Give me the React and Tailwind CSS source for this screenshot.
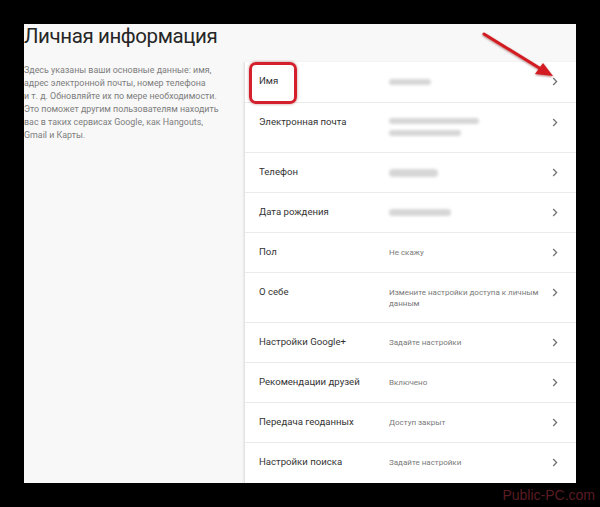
import React from 'react';

const Chevron = () => (
  <svg width="6" height="9" viewBox="0 0 6 9" className="shrink-0">
    <path d="M1.2 1 L4.6 4.5 L1.2 8" fill="none" stroke="#757575" strokeWidth="1.3" />
  </svg>
);

const Blur = ({ w, className = '' }) => (
  <div className={`h-[6px] rounded-sm bg-[#d6d6d6] blur-[1.5px] ${className}`} style={{ width: w }} />
);

const rows = [
  { label: 'Имя', h: 'h-[41px]', value: <Blur w={42} className="mt-[3px]" /> },
  {
    label: 'Электронная почта',
    h: 'h-[50px]',
    value: (
      <div className="flex flex-col gap-[6px] pt-[1px]">
        <Blur w={90} />
        <Blur w={72} />
      </div>
    ),
  },
  { label: 'Телефон', h: 'h-[40px]', value: <Blur w={49} className="mt-[2px] h-[8px]" /> },
  { label: 'Дата рождения', h: 'h-[40px]', value: <Blur w={62} className="mt-[2px] h-[7px]" /> },
  { label: 'Пол', h: 'h-[40px]', value: 'Не скажу' },
  { label: 'О себе', h: 'h-[50px]', value: 'Измените настройки доступа к личным данным' },
  { label: 'Настройки Google+', h: 'h-[40px]', value: 'Задайте настройки' },
  { label: 'Рекомендации друзей', h: 'h-[40px]', value: 'Включено' },
  { label: 'Передача геоданных', h: 'h-[40px]', value: 'Доступ закрыт' },
  { label: 'Настройки поиска', h: 'h-[40px]', value: 'Задайте настройки' },
];

const Row = ({ label, value, h, last }) => (
  <div className={`flex pl-[14px] pr-[18px] ${h} ${last ? '' : 'border-b border-[#ebebeb]'}`}>
    <div className="w-[130px] shrink-0 pt-[12px] text-[9.6px] leading-[14px] text-[#333]">{label}</div>
    <div className="w-[150px] pt-[14px] text-[8px] leading-[11px] text-[#7a7a7a]">{value}</div>
    <div className="ml-auto pt-[15px]">
      <Chevron />
    </div>
  </div>
);

export default function App() {
  return (
    <div className="relative w-[600px] h-[507px] bg-black overflow-hidden font-['Roboto','Liberation_Sans',sans-serif]">
      <div className="pt-[24px] px-[24px]">
        <div className="h-[459px] bg-[#f8f8f8] flex flex-col">
          {/* Title */}
          <div className="h-[38px]">
            <h1 className="-mt-[1px] text-[20.5px] leading-[26px] font-normal text-[#262626] tracking-[-0.4px]">
              Личная информация
            </h1>
          </div>

          <div className="flex flex-1">
            {/* Description */}
            <div className="w-[220px] shrink-0 pt-[2px] text-[8.9px] leading-[13px] text-[#7d7d7d] whitespace-nowrap">
              Здесь указаны ваши основные данные: имя,
              <br />
              адрес электронной почты, номер телефона
              <br />
              и т. д. Обновляйте их по мере необходимости.
              <br />
              Это поможет другим пользователям находить
              <br />
              вас в таких сервисах Google, как Hangouts,
              <br />
              Gmail и Карты.
            </div>

            {/* Card */}
            <div className="relative flex-1 bg-white border-l border-[#e2e2e2] shadow-[-1px_0_2px_rgba(0,0,0,0.06)]">
              {rows.map((r, i) => (
                <Row key={r.label} {...r} last={i === rows.length - 1} />
              ))}
              {/* highlight box */}
              <div className="absolute left-[4px] top-[0px] w-[48px] h-[42px] rounded-[7px] border-[3px] border-[#d3202c] shadow-[0_0_3px_rgba(120,0,0,0.45)]" />
            </div>
          </div>
        </div>
        <div className="flex justify-end h-[24px] items-center -mr-[19px] pt-[1px]">
          <span className="font-['Liberation_Sans',sans-serif] text-[14px] text-[#5a1c22]">Public-PC.com</span>
        </div>
      </div>

      {/* arrow */}
      <svg className="absolute left-0 top-0" width="600" height="507" viewBox="0 0 600 507">
        <defs>
          <filter id="sh" x="-20%" y="-20%" width="140%" height="140%">
            <feDropShadow dx="0" dy="1" stdDeviation="1" floodColor="#600" floodOpacity="0.5" />
          </filter>
        </defs>
        <g filter="url(#sh)">
          <line x1="484" y1="34" x2="541" y2="69" stroke="#d21c20" strokeWidth="3" strokeLinecap="round" />
          <path d="M553 76 L535 74 L543 63 Z" fill="#d21c20" />
        </g>
      </svg>
    </div>
  );
}
